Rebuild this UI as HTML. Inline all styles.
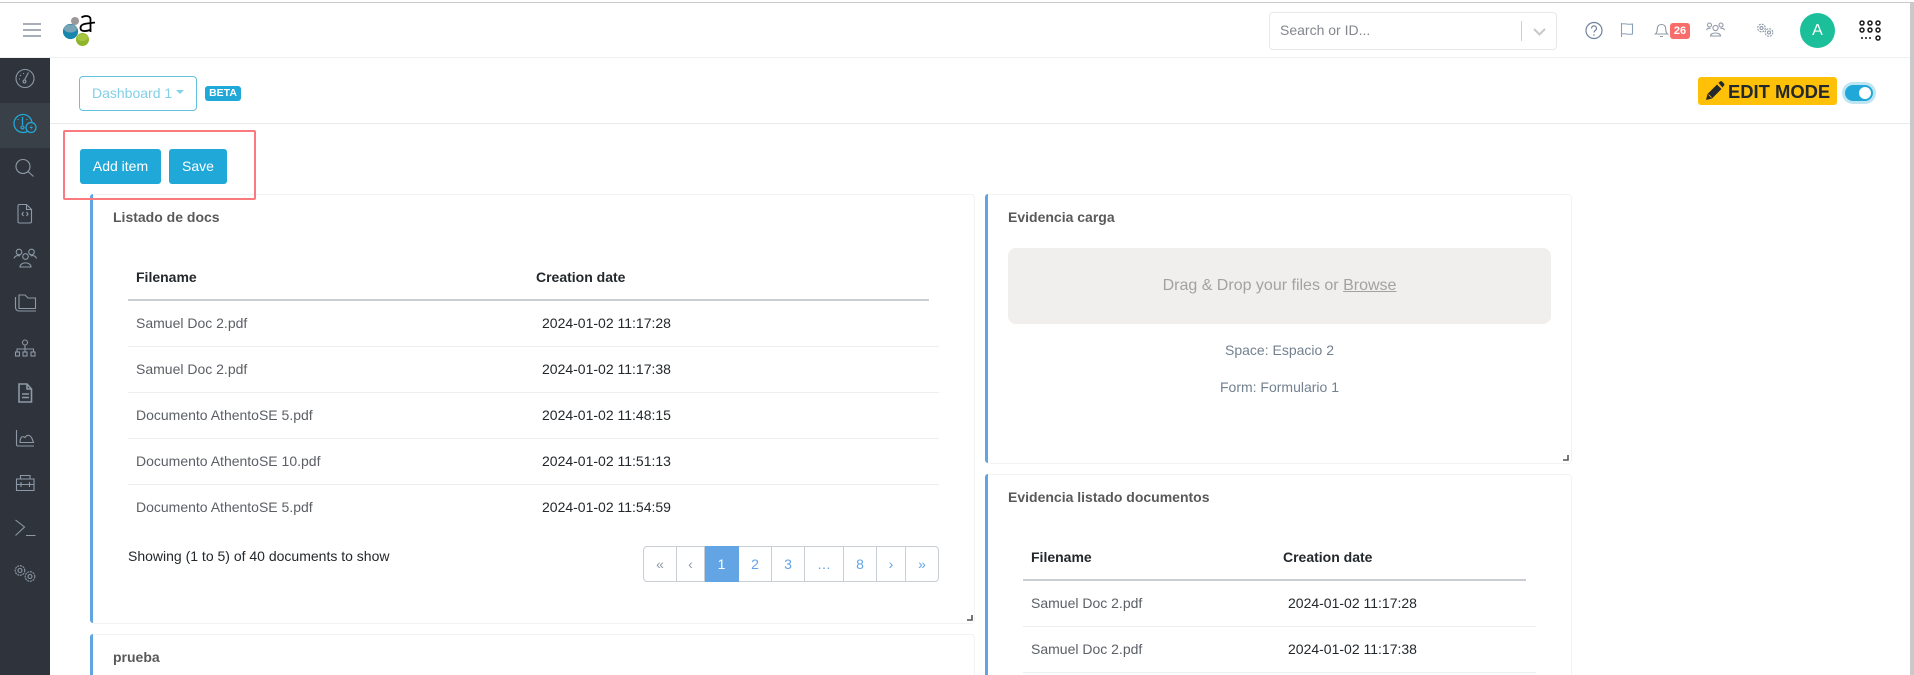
<!DOCTYPE html>
<html><head><meta charset="utf-8"><style>
*{box-sizing:border-box}
html,body{margin:0;padding:0;width:1914px;height:675px;overflow:hidden;background:#fff}
#r{position:relative;width:1914px;height:675px;overflow:hidden;background:#fff;font-family:"Liberation Sans",sans-serif;font-size:14px;color:#212529}
.a{position:absolute}
.t{position:absolute;white-space:nowrap;line-height:16px}
.card{position:absolute;background:#fff;border:1px solid #f1f2f4;border-radius:4px}
.bl{position:absolute;width:3px;background:#5fa5e3;border-radius:3px 0 0 3px}
.ln{position:absolute;height:1px;background:#eceef0}
.hl{position:absolute;height:2px;background:#c8ced3}
.h{font-weight:bold;color:#23282c}
.f{color:#5c6066}
.d{color:#23282c}
.ttl{font-weight:bold;color:#595959}
svg{position:absolute;fill:none}
.pg{position:absolute;top:546px;height:36px;border:1px solid #c8ced3;border-left:0;text-align:center;line-height:34px;color:#63a5e4;background:#fff}
</style></head><body><div id="r">
<div class="a" style="left:0;top:2px;width:1914px;height:1px;background:#c8c8c8"></div>
<div class="a" style="left:0;top:57px;width:1914px;height:1px;background:#eef0f2"></div>
<div class="a" style="left:1910px;top:2px;width:4px;height:673px;background:#c9c9c9"></div>

<svg style="left:0;top:0" width="60" height="57"><path d="M23 24h18M23 30h18M23 36h18" stroke="#8a94a0" stroke-width="1.600"/></svg>
<svg style="left:0;top:0" width="110" height="57">
<circle cx="70.500" cy="31.500" r="7.600" fill="#1987ad"/><ellipse cx="70.500" cy="28.500" rx="6.500" ry="4" fill="#7ba3b6"/>
<circle cx="75" cy="21" r="4" fill="#9c9898"/>
<circle cx="82.500" cy="39.500" r="6.500" fill="#8fb52b"/><ellipse cx="82.500" cy="37.500" rx="5.500" ry="3.500" fill="#a6c640"/>
<path d="M81.500 17.500C84 15.500 90 15 90.500 19L90.500 32M95 22.500L87 23.500C82 24 80.500 26 80.500 28C80.500 31 84 32 90 30" stroke="#000" stroke-width="1.800"/>
</svg>

<!-- search -->
<div class="a" style="left:1269px;top:12px;width:288px;height:38px;border:1px solid #e6e8ea;border-radius:4px"></div>
<div class="t" style="left:1280px;top:22px;color:#83878c">Search or ID...</div>
<div class="a" style="left:1521px;top:21px;width:1px;height:20px;background:#cfcfcf"></div>
<svg style="left:1533px;top:27px" width="20" height="10"><path d="M1 2l5.500 5.500L12 2" stroke="#c8c8c8" stroke-width="2"/></svg>

<!-- top icons -->
<svg style="left:1585px;top:21px" width="20" height="20"><circle cx="9" cy="9.500" r="8" stroke="#6f8299" stroke-width="1.200"/><path d="M6.500 7.500c0-3.500 5-3.500 5 0 0 2-2.500 2-2.500 4" stroke="#6f8299" stroke-width="1.200"/><circle cx="9" cy="14" r=".8" fill="#6f8299"/></svg>
<svg style="left:1620px;top:22px" width="16" height="18"><path d="M1.500 1v14M1.500 2c4-1 6 1 11 0v10c-5 1-7-1-11 0" stroke="#8aa0b8" stroke-width="1.100"/></svg>
<svg style="left:1654px;top:22px" width="16" height="17"><path d="M1.500 12c2-1.500 1.500-4 2-6.500.8-4 7.200-4 8 0 .5 2.500 0 5 2 6.500zM6 14.500h3" stroke="#8d99a6" stroke-width="1.100"/></svg>
<div class="a" style="left:1670px;top:23px;width:20px;height:16px;background:#f86c6b;border-radius:3px;color:#fff;font-weight:bold;font-size:11px;line-height:16px;text-align:center">26</div>
<svg style="left:1706px;top:22px" width="20" height="16"><g stroke="#8d99a6" stroke-width="1.100"><circle cx="9.500" cy="6" r="2.600"/><circle cx="3.500" cy="3" r="2"/><circle cx="15" cy="3" r="2"/><path d="M4.500 14c0-4 10-4 10 0zM.5 8c.8-2 3-2 4-1.500M18.500 8c-.8-2-3-2-4-1.500"/></g></svg>
<svg style="left:1756px;top:23px" width="20" height="16"><g stroke="#8d99a6" stroke-width="1.100"><circle cx="5.500" cy="5" r="3.800" stroke-dasharray="2 1"/><circle cx="5.500" cy="5" r="1.500"/><circle cx="13" cy="9.500" r="3.800" stroke-dasharray="2 1"/><circle cx="13" cy="9.500" r="1.500"/></g></svg>
<div class="a" style="left:1800px;top:13px;width:35px;height:35px;border-radius:50%;background:#1bbf9a;color:#fff;font-size:16px;line-height:35px;text-align:center">A</div>
<svg style="left:1859px;top:20px" width="24" height="22"><g stroke="#1a1a1a" stroke-width="1.500"><circle cx="3" cy="3" r="2"/><circle cx="11" cy="3" r="2"/><circle cx="19" cy="3" r="2"/><circle cx="3" cy="10" r="2"/><circle cx="11" cy="10" r="2"/><circle cx="19" cy="10" r="2"/><circle cx="19" cy="18" r="2"/></g><g fill="#1a1a1a"><circle cx="3" cy="18" r="1"/><circle cx="7" cy="18" r="1"/><circle cx="11" cy="18" r="1"/></g></svg>

<!-- sidebar -->
<div class="a" style="left:0;top:58px;width:50px;height:617px;background:#2f343c"></div>
<div class="a" style="left:0;top:103px;width:50px;height:45px;background:#3a4047"></div>
<svg style="left:0;top:58px" width="50" height="617">
<g stroke="#8d99a6" stroke-width="1.100">
<circle cx="25" cy="20.500" r="9"/><path d="M24.500 22l4-7.500M20 17l1 1M23.500 15v1M19 21h1"/><circle cx="24.500" cy="23.500" r="1.400"/>
<circle cx="23" cy="108.500" r="7"/><path d="M28 113.500l5.500 5"/>
<path d="M19.500 146.500h7l5 5v12a1.500 1.500 0 0 1-1.500 1.500h-10.500a1.500 1.500 0 0 1-1.500-1.500v-15.500a1.500 1.500 0 0 1 1.500-1.500zM26.500 146.500v5h5M23.500 154l-1.500 2 1.500 2M26.500 154l1.500 2-1.500 2"/>
<circle cx="19" cy="194" r="2.800"/><circle cx="31.500" cy="194" r="2.800"/><circle cx="25.500" cy="198.500" r="2.800"/><path d="M20 209c0-5.500 11-5.500 11 0zM14 200.500c1-3 4-3.500 6-2.500M36.500 200.500c-1-3-4-3.500-6-2.500"/>
<path d="M19 250.500v-13.500h6l3 3h7.500v10.500zM15.500 239v10.500a3.500 3.500 0 0 0 3.500 3.500h17"/>
<circle cx="25" cy="284.500" r="2.500"/><path d="M25 287v7M17 294v-3h16.500v3M25 291v3"/><rect x="15.500" y="294" width="4" height="4"/><rect x="23" y="294" width="4" height="4"/><rect x="31" y="294" width="4" height="4"/>
<path d="M19 326h8l4.500 5v13h-12.500zM27 326v5h4.500" stroke-width="1.600"/><path d="M22 336h7M22 339.500h7" stroke-width="1.500"/>
<path d="M16.500 372v14.500a1.500 1.500 0 0 0 1.500 1.500h16M20 384.500c0-5 2-7 5-5 2-3 5-3 7 1l1.500 4z"/>
<path d="M16.500 421h17.500v11.500h-17.500zM20.500 421v-3.500h9.500v3.500M16.500 426.500h17.500M21 424v5M29.500 424v5"/>
<path d="M15.500 462l9 7-9 8.500M26 477.500h9.500"/>
<g stroke-dasharray="2 .8"><circle cx="20" cy="512.500" r="4.800"/><circle cx="30" cy="518.500" r="4.800"/></g><circle cx="20" cy="512.500" r="2"/><circle cx="30" cy="518.500" r="2"/>
</g>
<g stroke="#20a8d8" stroke-width="1.300"><circle cx="23" cy="65.500" r="9"/><path d="M22.500 59v8M18 61v1M27 61v1"/><circle cx="22.500" cy="69.500" r="1.500"/><circle cx="31" cy="69.500" r="5" fill="#3a4047"/></g><path d="M32 66.500l-2.500 3.500h2l-1 2.500 2.500-3.500h-2z" fill="#20a8d8"/>
</svg>

<!-- subheader -->
<div class="a" style="left:79px;top:76px;width:118px;height:35px;border:1px solid #63c2de;border-radius:4px"></div>
<div class="t" style="left:92px;top:85px;color:#82cfe7">Dashboard 1</div>
<div class="a" style="left:176px;top:90px;border:4px solid transparent;border-top-color:#82cfe7;border-bottom:0"></div>
<div class="a" style="left:205px;top:86px;width:36px;height:15px;background:#20a8d8;border-radius:3px;color:#fff;font-weight:bold;font-size:10.500px;line-height:15px;text-align:center">BETA</div>
<div class="a" style="left:50px;top:123px;width:1860px;height:1px;background:#e8eaec"></div>
<div class="a" style="left:1698px;top:77px;width:139px;height:28px;background:#ffc107;border-radius:3px"></div>
<svg style="left:1705px;top:81px" width="20" height="20"><path d="M1 19l1.500-6L12 3.500l4.500 4.500L7 17.500zM13.500 2l1.500-1.500c.8-.5 1.500-.5 2 0l2 2c.5.6.5 1.300 0 2L17.500 6.500z" fill="#23282c"/><path d="M3.500 13.500l3 3" stroke="#ffc107" stroke-width=".8"/></svg>
<div class="t" style="left:1728px;top:82px;font-weight:bold;font-size:18.400px;line-height:20px;color:#23282c">EDIT MODE</div>
<div class="a" style="left:1842px;top:82px;width:34px;height:22px;border-radius:11px;background:#bfe5f3"></div>
<div class="a" style="left:1845px;top:85px;width:28px;height:16px;border-radius:8px;background:#20a8d8"></div>
<div class="a" style="left:1859px;top:87px;width:12px;height:12px;border-radius:50%;background:#fff"></div>

<!-- buttons -->
<div class="a" style="left:80px;top:149px;width:81px;height:35px;background:#20a8d8;border-radius:3px;color:#fff;line-height:35px;text-align:center">Add item</div>
<div class="a" style="left:169px;top:149px;width:58px;height:35px;background:#20a8d8;border-radius:3px;color:#fff;line-height:35px;text-align:center">Save</div>

<!-- left card -->
<div class="card" style="left:91px;top:194px;width:884px;height:430px"></div>
<div class="bl" style="left:90px;top:194px;height:429px"></div>
<div class="t ttl" style="left:113px;top:209px">Listado de docs</div>
<div class="t h" style="left:136px;top:269px">Filename</div>
<div class="t h" style="left:536px;top:269px">Creation date</div>
<div class="hl" style="left:128px;top:299px;width:801px"></div>
<div class="t f" style="left:136px;top:315px">Samuel Doc 2.pdf</div><div class="t d" style="left:542px;top:315px">2024-01-02 11:17:28</div>
<div class="ln" style="left:128px;top:346px;width:811px"></div>
<div class="t f" style="left:136px;top:361px">Samuel Doc 2.pdf</div><div class="t d" style="left:542px;top:361px">2024-01-02 11:17:38</div>
<div class="ln" style="left:128px;top:392px;width:811px"></div>
<div class="t f" style="left:136px;top:407px">Documento AthentoSE 5.pdf</div><div class="t d" style="left:542px;top:407px">2024-01-02 11:48:15</div>
<div class="ln" style="left:128px;top:438px;width:811px"></div>
<div class="t f" style="left:136px;top:453px">Documento AthentoSE 10.pdf</div><div class="t d" style="left:542px;top:453px">2024-01-02 11:51:13</div>
<div class="ln" style="left:128px;top:484px;width:811px"></div>
<div class="t f" style="left:136px;top:499px">Documento AthentoSE 5.pdf</div><div class="t d" style="left:542px;top:499px">2024-01-02 11:54:59</div>
<div class="t d" style="left:128px;top:548px">Showing (1 to 5) of 40 documents to show</div>

<div class="pg" style="left:643px;width:34px;border-left:1px solid #c8ced3;border-radius:4px 0 0 4px;color:#8d99a6">«</div>
<div class="pg" style="left:677px;width:28px;color:#8d99a6">‹</div>
<div class="pg" style="left:705px;width:34px;background:#63a5e4;border-color:#63a5e4;color:#fff">1</div>
<div class="pg" style="left:739px;width:33px">2</div>
<div class="pg" style="left:772px;width:33px">3</div>
<div class="pg" style="left:805px;width:39px">…</div>
<div class="pg" style="left:844px;width:33px">8</div>
<div class="pg" style="left:877px;width:29px">›</div>
<div class="pg" style="left:906px;width:33px;border-radius:0 4px 4px 0">»</div>
<svg style="left:966px;top:615px" width="7" height="7"><path d="M1 5h5V0" stroke="#555" stroke-width="1.600"/></svg>

<!-- prueba -->
<div class="card" style="left:91px;top:634px;width:884px;height:41px;border-bottom:0;border-radius:4px 4px 0 0"></div>
<div class="bl" style="left:90px;top:634px;height:41px;border-radius:3px 0 0 0"></div>
<div class="t ttl" style="left:113px;top:649px">prueba</div>

<!-- right card 1 -->
<div class="card" style="left:986px;top:194px;width:586px;height:270px"></div>
<div class="bl" style="left:985px;top:194px;height:269px"></div>
<div class="t ttl" style="left:1008px;top:209px">Evidencia carga</div>
<div class="a" style="left:1008px;top:248px;width:543px;height:76px;background:#f0efee;border-radius:8px"></div>
<div class="t" style="left:1008px;top:277px;width:543px;text-align:center;font-size:16px;line-height:18px;color:#a3a2a0">Drag &amp; Drop your files or <u>Browse</u></div>
<div class="t" style="left:1008px;top:342px;width:543px;text-align:center;color:#73818f">Space: Espacio 2</div>
<div class="t" style="left:1008px;top:379px;width:543px;text-align:center;color:#73818f">Form: Formulario 1</div>
<svg style="left:1562px;top:455px" width="7" height="7"><path d="M1 5h5V0" stroke="#555" stroke-width="1.600"/></svg>

<!-- right card 2 -->
<div class="card" style="left:986px;top:474px;width:586px;height:201px;border-bottom:0;border-radius:4px 4px 0 0"></div>
<div class="bl" style="left:985px;top:474px;height:201px;border-radius:3px 0 0 0"></div>
<div class="t ttl" style="left:1008px;top:489px">Evidencia listado documentos</div>
<div class="t h" style="left:1031px;top:549px">Filename</div>
<div class="t h" style="left:1283px;top:549px">Creation date</div>
<div class="hl" style="left:1023px;top:579px;width:503px"></div>
<div class="t f" style="left:1031px;top:595px">Samuel Doc 2.pdf</div><div class="t d" style="left:1288px;top:595px">2024-01-02 11:17:28</div>
<div class="ln" style="left:1023px;top:626px;width:513px"></div>
<div class="t f" style="left:1031px;top:641px">Samuel Doc 2.pdf</div><div class="t d" style="left:1288px;top:641px">2024-01-02 11:17:38</div>
<div class="ln" style="left:1023px;top:672px;width:513px"></div>

<!-- red box -->
<div class="a" style="left:63px;top:130px;width:193px;height:70px;border:2px solid #fb7a7e;border-radius:2px"></div>
</div></body></html>
